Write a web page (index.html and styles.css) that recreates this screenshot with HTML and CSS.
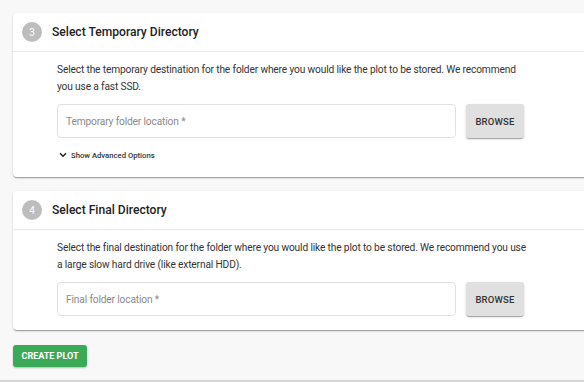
FILE: index.html
```html
<!DOCTYPE html>
<html lang="en">

<head>
    <meta charset="UTF-8">
    <meta name="viewport" content="width=device-width, initial-scale=1.0">
    <title>Create Plot</title>
    <link rel="stylesheet" href="styles.css">
</head>

<body>
    <main class="page">
        <section class="step">
            <header class="step-head">
                <span class="step-num">3</span>
                <h2 class="step-title">Select Temporary Directory</h2>
            </header>
            <div class="step-body">
                <p class="step-text">Select the temporary destination for the folder where you would like the plot to be stored. We recommend you use a fast SSD.</p>
                <div class="field-row">
                    <input class="field" type="text" placeholder="Temporary folder location *">
                    <button type="button" class="browse">Browse</button>
                </div>
                <button type="button" class="advanced">
                    <svg width="8" height="6" viewBox="0 0 8 6"><path d="M1 1.2 4 4.2 7 1.2" fill="none" stroke="#222" stroke-width="1.5"/></svg>
                    Show Advanced Options
                </button>
            </div>
        </section>

        <section class="step step-final">
            <header class="step-head">
                <span class="step-num">4</span>
                <h2 class="step-title">Select Final Directory</h2>
            </header>
            <div class="step-body">
                <p class="step-text">Select the final destination for the folder where you would like the plot to be stored. We recommend you use a large slow hard drive (like external HDD).</p>
                <div class="field-row">
                    <input class="field" type="text" placeholder="Final folder location *">
                    <button type="button" class="browse">Browse</button>
                </div>
            </div>
        </section>

        <button type="button" class="create">Create Plot</button>
    </main>
</body>

</html>
```
FILE: styles.css
```css
html,
body {
    margin: 0;
    background: #f8f8f8;
    font-family: Roboto, "Liberation Sans", sans-serif;
    color: #333;
    overflow: hidden;
}

.page {
    box-sizing: border-box;
    height: 382px;
    padding: 13px 0 0 13px;
    border-bottom: 2px solid #d4d4d4;
}

.step {
    margin-right: -12px;
    background: #fff;
    border-radius: 4px;
    box-shadow: 0 2px 1px -1px rgba(0, 0, 0, .2), 0 1px 1px 0 rgba(0, 0, 0, .14), 0 1px 3px 0 rgba(0, 0, 0, .12);
}

.step-final {
    margin-top: 14px;
}

.step-head {
    display: flex;
    align-items: center;
    gap: 10px;
    height: 38px;
    padding-left: 9px;
    border-bottom: 1px solid #e8e8e8;
}

.step-num {
    display: flex;
    align-items: center;
    justify-content: center;
    width: 20px;
    height: 20px;
    border-radius: 50%;
    background: #bdbdbd;
    color: #fff;
    font-size: 10px;
}

.step-title {
    margin: 0;
    font-size: 12.1px;
    font-weight: 500;
    color: #222;
}

.step-body {
    padding: 9px 0 16px 44px;
}

.step-final .step-body {
    padding-bottom: 14px;
}

.step-text {
    max-width: 469px;
    margin: 0;
    font-size: 10.2px;
    letter-spacing: -.15px;
    line-height: 17px;
    color: #333;
}

.field-row {
    display: flex;
    gap: 10px;
    width: 467px;
    margin-top: 9px;
}

.field {
    flex: 1;
    box-sizing: border-box;
    height: 34px;
    padding: 0 8px;
    border: 1px solid #e0e0e0;
    border-radius: 4px;
    font-family: inherit;
    font-size: 10.2px;
    letter-spacing: -.15px;
    color: #333;
    outline: none;
}

.field::placeholder {
    color: #8a8a8a;
}

.browse {
    width: 58px;
    height: 34px;
    border: 0;
    border-radius: 3px;
    background: #e0e0e0;
    box-shadow: 0 2px 1px -1px rgba(0, 0, 0, .2), 0 1px 1px 0 rgba(0, 0, 0, .14), 0 1px 3px 0 rgba(0, 0, 0, .12);
    font-family: inherit;
    font-size: 9.5px;
    font-weight: 500;
    letter-spacing: .2px;
    text-transform: uppercase;
    color: #333;
}

.advanced {
    display: flex;
    align-items: center;
    gap: 4px;
    height: 12px;
    margin-top: 11px;
    padding: 0 0 0 2px;
    border: 0;
    background: none;
    font-family: inherit;
    font-size: 7.7px;
    font-weight: 500;
    color: #333;
}

.create {
    display: block;
    width: 74px;
    height: 22px;
    margin-top: 15px;
    border: 0;
    border-radius: 3px;
    background: #3aaa59;
    box-shadow: 0 1px 2px rgba(0, 0, 0, .25);
    font-family: inherit;
    font-size: 9px;
    font-weight: 700;
    text-transform: uppercase;
    color: #fff;
}
```
